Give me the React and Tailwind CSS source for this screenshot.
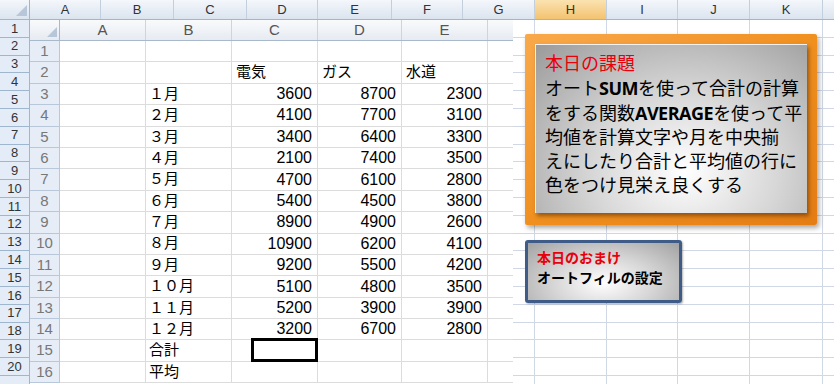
import React from "react";

const outerCols = [
  { l: "A", w: "w-[71px]" },
  { l: "B", w: "w-[73px]" },
  { l: "C", w: "w-[73px]" },
  { l: "D", w: "w-[71px]" },
  { l: "E", w: "w-[74px]" },
  { l: "F", w: "w-[71px]" },
  { l: "G", w: "w-[72px]" },
  { l: "H", w: "w-[72px]", active: true },
  { l: "I", w: "w-[71px]" },
  { l: "J", w: "w-[72px]" },
  { l: "K", w: "w-[73px]" },
];

const innerCols = [
  { l: "A", w: "w-[86px]" },
  { l: "B", w: "w-[86px]" },
  { l: "C", w: "w-[86px]" },
  { l: "D", w: "w-[84px]" },
  { l: "E", w: "w-[86px]" },
];

const innerRows = [
  ["", "", "", ""],
  ["", "電気", "ガス", "水道"],
  ["１月", "3600", "8700", "2300"],
  ["２月", "4100", "7700", "3100"],
  ["３月", "3400", "6400", "3300"],
  ["４月", "2100", "7400", "3500"],
  ["５月", "4700", "6100", "2800"],
  ["６月", "5400", "4500", "3800"],
  ["７月", "8900", "4900", "2600"],
  ["８月", "10900", "6200", "4100"],
  ["９月", "9200", "5500", "4200"],
  ["１０月", "5100", "4800", "3500"],
  ["１１月", "5200", "3900", "3900"],
  ["１２月", "3200", "6700", "2800"],
  ["合計", "", "", ""],
  ["平均", "", "", ""],
];

function Corner({ size }) {
  return (
    <svg width={size} height={size} viewBox="0 0 10 10" className="absolute right-[2px] bottom-[3px]">
      <polygon points="10,0 10,10 0,10" fill="#b7c6d8" />
    </svg>
  );
}

function OuterSheet() {
  const rows = Array.from({ length: 21 }, (_, i) => i + 1);
  return (
    <div className="flex flex-col">
      <div className="flex h-[20px] border-b border-[#9eb6ce] bg-gradient-to-b from-[#f4f7fb] to-[#dbe4ef]">
        <div className="relative w-[30px] border-r border-[#9eb6ce]">
          <Corner size={11} />
        </div>
        {outerCols.map((c) => (
          <div
            key={c.l}
            className={`${c.w} flex items-center justify-center border-r border-[#c3cfdd] text-[13px] text-[#333] ${
              c.active ? "bg-gradient-to-b from-[#fbe3b0] to-[#f3c36f]" : ""
            }`}
          >
            {c.l}
          </div>
        ))}
        <div className="flex-1" />
      </div>
      {rows.map((r) => (
        <div key={r} className="flex h-[17.8px]">
          <div className="flex w-[30px] items-center justify-center border-r border-b border-[#9eb6ce] bg-[#e4ecf7] text-[13px] text-[#333]">
            {r <= 20 ? r : ""}
          </div>
          {outerCols.map((c) => (
            <div key={c.l} className={`${c.w} border-r border-b border-[#d0d7e5]`} />
          ))}
          <div className="flex-1 border-b border-[#d0d7e5]" />
        </div>
      ))}
    </div>
  );
}

function InnerSheet() {
  return (
    <div className="absolute left-[30px] top-[20px] flex h-[364px] w-[483px] flex-col overflow-hidden bg-white">
      <div className="flex h-[21px] shrink-0 border-b border-[#a9b9cc] bg-gradient-to-b from-[#f9fafc] to-[#e6ebf2]">
        <div className="relative w-[30px] border-r border-[#a9b9cc]">
          <Corner size={10} />
        </div>
        {innerCols.map((c) => (
          <div
            key={c.l}
            className={`${c.w} flex items-center justify-center border-r border-[#cdd4dd] text-[15px] text-[#555]`}
          >
            {c.l}
          </div>
        ))}
        <div className="flex-1" />
      </div>
      {innerRows.map((row, i) => (
        <div key={i} className="flex h-[21.4px] shrink-0">
          <div className="flex w-[30px] items-center justify-center border-r border-b border-[#b8c7da] bg-[#e6edf7] text-[15px] text-[#777]">
            {i + 1}
          </div>
          <div className="w-[86px] border-r border-b border-[#dcdcdc]" />
          <div className="flex w-[86px] items-center border-r border-b border-[#dcdcdc] pl-[3px] text-[15px] text-black">
            {row[0]}
          </div>
          {row.slice(1).map((v, j) => {
            const w = j === 1 ? "w-[84px]" : "w-[86px]";
            const isNum = /^\d+$/.test(v);
            return (
              <div
                key={j}
                className={`${w} relative flex items-center border-r border-b border-[#dcdcdc] text-black ${
                  isNum ? "justify-end pr-[5px] text-[16px]" : "justify-start pl-[4px] text-[15px]"
                }`}
              >
                {v}
                {i === 14 && j === 0 ? (
                  <div className="absolute left-[19px] right-[-1px] top-[-2px] bottom-[-1px] border-[3px] border-black" />
                ) : null}
              </div>
            );
          })}
          <div className="flex-1 border-b border-[#dcdcdc]" />
        </div>
      ))}
    </div>
  );
}

function TaskBox() {
  return (
    <div className="absolute left-[525px] top-[34px] flex h-[191px] w-[292px] rounded-[2px] bg-gradient-to-br from-[#f9a94a] via-[#f0901f] to-[#e47d14] pt-[10px] pr-[10px] pb-[12px] pl-[10px] shadow-[2px_3px_5px_rgba(0,0,0,0.35)]">
      <div className="flex-1 border-t border-l border-[#f2f2f2] bg-[radial-gradient(ellipse_at_55%_75%,#ffffff_0%,#d6d6d6_45%,#9a9a9a_100%)] pt-[7px] pl-[9px] shadow-[2px_3px_4px_rgba(80,40,0,0.55)]">
        <div className="whitespace-nowrap text-[18px] leading-[24px] text-black">
          <div className="text-[#e8000b]">本日の課題</div>
          <div>
            オート<span className="font-['Open_Sans',sans-serif] font-bold tracking-[-0.5px]">SUM</span>を使って合計の計算
          </div>
          <div>
            をする関数<span className="font-['Open_Sans',sans-serif] font-bold tracking-[-0.5px]">AVERAGE</span>を使って平
          </div>
          <div>均値を計算文字や月を中央揃</div>
          <div>えにしたり合計と平均値の行に</div>
          <div>色をつけ見栄え良くする</div>
        </div>
      </div>
    </div>
  );
}

function BonusBox() {
  return (
    <div className="absolute left-[525px] top-[240px] flex h-[63px] w-[157px] flex-col rounded-[3px] border-[3px] border-[#3e5c87] bg-[radial-gradient(ellipse_at_50%_70%,#ffffff_0%,#d8d8d8_45%,#a2a2a2_100%)] pt-[5px] pl-[9px] shadow-[1px_1px_2px_rgba(0,0,0,0.3)]">
      <div className="whitespace-nowrap text-[14px] font-bold leading-[20px] text-[#e8000b]">本日のおまけ</div>
      <div className="whitespace-nowrap text-[14px] font-bold leading-[20px] text-black">オートフィルの設定</div>
    </div>
  );
}

export default function App() {
  return (
    <div className="relative h-[384px] w-[834px] overflow-hidden bg-white font-['Liberation_Sans','Noto_Sans_CJK_JP',sans-serif]">
      <OuterSheet />
      <InnerSheet />
      <TaskBox />
      <BonusBox />
    </div>
  );
}
